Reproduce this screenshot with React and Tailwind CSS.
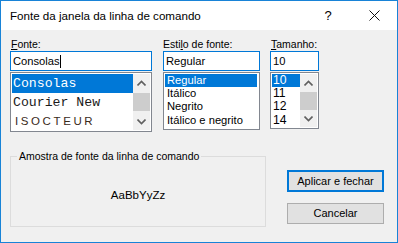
import React from "react";

const ui = { fontFamily: '"Liberation Sans", Arial, sans-serif' };
const mono = { fontFamily: '"Liberation Mono", "DejaVu Sans Mono", monospace' };

const Chevron = ({ up }) => (
  <svg width="9" height="6" viewBox="0 0 9 6" className="block">
    <polyline
      points={up ? "0.5,5.5 4.5,1.5 8.5,5.5" : "0.5,0.5 4.5,4.5 8.5,0.5"}
      fill="none"
      stroke="#606060"
      strokeWidth="1.6"
    />
  </svg>
);

const ScrollBar = ({ thumbTop, thumbH }) => (
  <div className="w-[17px] h-full bg-[#f0f0f0] flex flex-col shrink-0">
    <div className="h-[17px] flex items-center justify-center">
      <Chevron up />
    </div>
    <div className="flex-1">
      <div className="bg-[#cdcdcd]" style={{ marginTop: thumbTop, height: thumbH }} />
    </div>
    <div className="h-[17px] flex items-center justify-center">
      <Chevron />
    </div>
  </div>
);

const Label = ({ u, rest }) => (
  <div className="h-[14px] leading-[14px] text-[10.5px] text-black">
    <span className="underline underline-offset-[1px]">{u}</span>
    {rest}
  </div>
);

const Field = ({ children }) => (
  <div className="h-[20px] border border-[#0078d7] bg-white flex items-center px-[2px] text-[11.2px] text-black">
    {children}
  </div>
);

export default function App() {
  return (
    <div
      className="w-[398px] h-[243px] border border-[#1883d7] bg-[#f0f0f0] flex flex-col overflow-hidden"
      style={ui}
    >
      {/* title bar */}
      <div className="h-[29px] bg-white flex items-center shrink-0">
        <div className="pl-[9px] text-[11.6px] text-black flex-1">
          Fonte da janela da linha de comando
        </div>
        <div className="w-[46px] text-center text-[13px] text-black">?</div>
        <div className="w-[46px] flex justify-center">
          <svg width="11" height="11" viewBox="0 0 11 11">
            <path d="M0.5 0.5 L10.5 10.5 M10.5 0.5 L0.5 10.5" stroke="#111" strokeWidth="1" />
          </svg>
        </div>
      </div>

      <div className="flex-1 flex flex-col pt-[7px] pl-[9px]">
        {/* top row */}
        <div className="flex">
          <div className="w-[142px]">
            <div className="pl-[1px]">
              <Label u="F" rest="onte:" />
            </div>
            <Field>
              Consolas
              <span className="inline-block w-[1px] h-[13px] bg-black" />
            </Field>
            <div className="mt-[1px] h-[60px] border border-[#828790] bg-white p-[1px] flex">
              <div className="flex-1 overflow-hidden text-[13.2px]" style={mono}>
                <div className="h-[19px] leading-[19px] bg-[#0078d7] text-white pl-[1px]">Consolas</div>
                <div className="h-[19px] leading-[19px] text-[#1a1a1a] pl-[1px]">Courier New</div>
                <div className="h-[19px] leading-[19px] text-[#3a2a1a] pl-[3px] tracking-[2.6px] text-[11.5px]" style={ui}>
                  ISOCTEUR
                </div>
              </div>
              <ScrollBar thumbTop={2} thumbH={18} />
            </div>
          </div>

          <div className="w-[97px] ml-[11px]">
            <Label u="" rest={<>Esti<span className="underline underline-offset-[1px]">l</span>o de fonte:</>} />
            <Field>Regular</Field>
            <div className="mt-[1px] h-[58px] border border-[#828790] bg-white p-[1px] text-[11.2px] text-black overflow-hidden">
              <div className="h-[13px] leading-[13px] bg-[#0078d7] text-white pl-[2px] mr-[1px]">Regular</div>
              <div className="h-[13.4px] leading-[13px] pl-[2px]">Itálico</div>
              <div className="h-[13.4px] leading-[13px] pl-[2px]">Negrito</div>
              <div className="h-[13.4px] leading-[13px] pl-[2px]">Itálico e negrito</div>
            </div>
          </div>

          <div className="w-[49px] ml-[10px]">
            <div className="pl-[1px]">
              <Label u="T" rest="amanho:" />
            </div>
            <Field>10</Field>
            <div className="mt-[1px] h-[57px] border border-[#828790] bg-white p-[1px] flex">
              <div className="flex-1 text-[12.2px] text-black overflow-hidden">
                <div className="h-[13px] leading-[13px] bg-[#0078d7] text-white pl-[1px]">10</div>
                <div className="h-[13.4px] leading-[13px] pl-[1px]">11</div>
                <div className="h-[13.4px] leading-[13px] pl-[1px]">12</div>
                <div className="h-[13.4px] leading-[13px] pl-[1px]">14</div>
              </div>
              <ScrollBar thumbTop={1} thumbH={18} />
            </div>
          </div>
        </div>

        {/* bottom row */}
        <div className="flex mt-[18px]">
          <fieldset className="w-[256px] h-[77px] border border-[#dcdcdc] rounded-none flex items-center justify-center">
            <legend className="ml-[6px] px-[2px] text-[10.5px] leading-[13px] text-black">
              Amostra de fonte da linha de comando
            </legend>
            <div className="text-[11.5px] text-black mt-[2px]">AaBbYyZz</div>
          </fieldset>

          <div className="ml-[21px] pt-[20px] flex flex-col gap-[11px]">
            <button className="w-[97px] h-[22px] border-2 border-[#0078d7] bg-[#e1e1e1] text-[11px] text-black">
              Aplicar e fechar
            </button>
            <button className="w-[97px] h-[21px] border border-[#adadad] bg-[#e1e1e1] text-[11px] text-black">
              Cancelar
            </button>
          </div>
        </div>
      </div>
    </div>
  );
}
